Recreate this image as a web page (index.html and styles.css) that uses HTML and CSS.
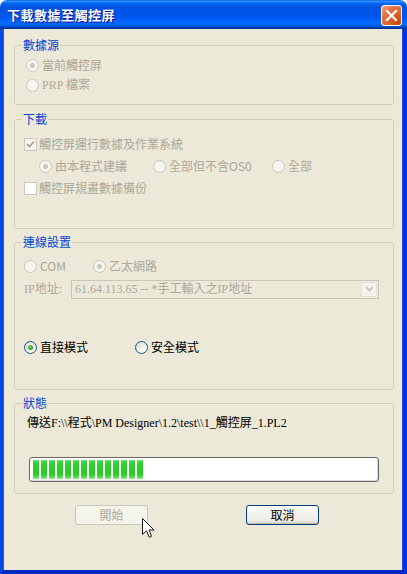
FILE: index.html
```html
<!DOCTYPE html>
<html lang="zh-Hant">
<head>
    <meta charset="UTF-8">
    <meta name="viewport" content="width=device-width, initial-scale=1.0">
    <title>下載數據至觸控屏</title>
    <link rel="stylesheet" href="styles.css">
</head>
<body>
    <section class="window">
        <div class="titlebar">
            <span class="title">下載數據至觸控屏</span>
            <span class="close_btn">
                <svg width="13" height="13" viewBox="0 0 13 13">
                    <path d="M2 2 L11 11 M11 2 L2 11" stroke="#fff" stroke-width="2.2" stroke-linecap="square"/>
                </svg>
            </span>
        </div>
        <div class="dialog_body">
            <fieldset class="group group_source">
                <legend>數據源</legend>
                <div class="group_inner">
                    <label class="opt disabled"><span class="radio checked"></span>當前觸控屏</label>
                    <label class="opt disabled serif"><span class="radio"></span>PRP 檔案</label>
                </div>
            </fieldset>

            <fieldset class="group group_download">
                <legend>下載</legend>
                <div class="group_inner">
                    <label class="opt row22 disabled">
                        <span class="check checked">
                            <svg width="9" height="9" viewBox="0 0 9 9"><path d="M1 4 L3.5 6.5 L8 1.5" stroke="#aca899" stroke-width="1.8" fill="none"/></svg>
                        </span>觸控屏運行數據及作業系統
                    </label>
                    <div class="opt_row row22 indent">
                        <label class="opt disabled w114"><span class="radio checked"></span>由本程式建議</label>
                        <label class="opt disabled w119"><span class="radio"></span>全部但不含OS0</label>
                        <label class="opt disabled"><span class="radio"></span>全部</label>
                    </div>
                    <label class="opt row22 disabled"><span class="check white"></span>觸控屏規畫數據備份</label>
                </div>
            </fieldset>

            <fieldset class="group group_conn">
                <legend>連線設置</legend>
                <div class="group_inner">
                    <div class="opt_row">
                        <label class="opt disabled w69"><span class="radio"></span>COM</label>
                        <label class="opt disabled"><span class="radio checked"></span>乙太網路</label>
                    </div>
                    <div class="ip_row">
                        <span class="ip_label serif">IP地址:</span>
                        <div class="combo">
                            <span class="combo_text serif">61.64.113.65 -- *手工輸入之IP地址</span>
                            <span class="combo_btn">
                                <svg width="9" height="6" viewBox="0 0 9 6"><path d="M1 1 L4.5 4.5 L8 1" stroke="#c8c6bb" stroke-width="2" fill="none"/></svg>
                            </span>
                        </div>
                    </div>
                    <div class="opt_row mode_row">
                        <label class="opt w111"><span class="radio on checked"></span>直接模式</label>
                        <label class="opt"><span class="radio on"></span>安全模式</label>
                    </div>
                </div>
            </fieldset>

            <fieldset class="group group_status">
                <legend>狀態</legend>
                <div class="group_inner">
                    <p class="status_text serif">傳送F:\\程式\PM Designer\1.2\test\\1_觸控屏_1.PL2</p>
                    <div class="progress">
                        <span class="bar"></span><span class="bar"></span><span class="bar"></span><span class="bar"></span>
                        <span class="bar"></span><span class="bar"></span><span class="bar"></span><span class="bar"></span>
                        <span class="bar"></span><span class="bar"></span><span class="bar"></span><span class="bar"></span>
                        <span class="bar"></span><span class="bar"></span>
                    </div>
                </div>
            </fieldset>

            <div class="actions">
                <span class="btn disabled">開始</span>
                <span class="btn default">取消</span>
                <svg class="cursor" width="13" height="21" viewBox="0 0 13 21">
                    <path d="M0.5 0.5 L0.5 16.5 L4.5 12.8 L7.2 19.3 L9.6 18.3 L7 12 L12 12 Z" fill="#fff" stroke="#1a1a2a" stroke-width="1"/>
                </svg>
            </div>
        </div>
    </section>
</body>
</html>
```

FILE: styles.css
```css
* {
    margin: 0;
    padding: 0;
    box-sizing: border-box;
}
body {
    width: 407px;
    height: 574px;
    background: #fff;
    font-family: "Noto Sans CJK TC", sans-serif;
    font-size: 12px;
    line-height: 14px;
    overflow: hidden;
}
.serif {
    font-family: "Liberation Serif", "Noto Sans CJK TC", serif;
}
.window {
    width: 407px;
    height: 574px;
    display: flex;
    flex-direction: column;
}
.titlebar {
    height: 29px;
    display: flex;
    align-items: center;
    justify-content: space-between;
    padding: 0 5px 0 7px;
    border-radius: 7px 7px 0 0;
    background: linear-gradient(to bottom, #0058ee 0%, #3593ff 4%, #288eff 6%, #127dff 8%, #036ffc 10%, #0262ee 14%, #0057e5 20%, #0054e3 24%, #0055eb 56%, #005bf5 66%, #026afe 76%, #0062ef 86%, #0052d6 92%, #0040ab 94%, #003092 100%);
}
.title {
    color: #fff;
    font-weight: bold;
    font-size: 13px;
    letter-spacing: 0.5px;
    text-shadow: 1px 1px #0f1089;
}
.close_btn {
    width: 21px;
    height: 21px;
    display: flex;
    align-items: center;
    justify-content: center;
    border: 1px solid #fff;
    border-radius: 3px;
    background: radial-gradient(circle at 85% 85%, #cc4600 0%, #dc6527 40%, #e5754a 70%, #f1a78c 100%);
    margin-top: 2px;
}
.dialog_body {
    flex: 1;
    background: #ece9d8;
    border-left: 3px solid #0748e0;
    border-right: 4px solid #0633d4;
    border-bottom: 4px solid #0129c4;
    box-shadow: inset 1px 0 #1661f0, inset -1px 0 #1552e6;
    padding: 9px 0 0 11px;
    display: flex;
    flex-direction: column;
}
.group {
    width: 380px;
    border: 1px solid #d0d0bf;
    border-radius: 3px;
    padding: 0;
    min-inline-size: 0;
}
.group legend {
    margin-left: 7px;
    padding: 0 1px;
    color: #0046d5;
    line-height: 14px;
}
.group_source {
    height: 67px;
}
.group_download {
    height: 117px;
    margin-top: 7px;
}
.group_conn {
    height: 155px;
    margin-top: 6px;
}
.group_status {
    height: 98px;
    margin-top: 6px;
}
.group_source .group_inner {
    padding: 3px 0 0 11px;
}
.group_download .group_inner,
.group_conn .group_inner {
    padding: 7px 0 0 9px;
}
.group_status .group_inner {
    padding: 5px 0 0 12px;
}
.opt_row {
    display: flex;
    align-items: center;
    height: 20px;
}
.opt {
    display: flex;
    align-items: center;
    height: 20px;
    color: #000;
    white-space: nowrap;
}
.row22 {
    height: 22px;
}
.indent {
    padding-left: 15px;
}
.w69 { width: 69px; }
.w111 { width: 111px; }
.w114 { width: 114px; }
.w119 { width: 119px; }
.opt.disabled {
    color: #aca899;
}
.radio {
    width: 13px;
    height: 13px;
    border-radius: 50%;
    border: 1px solid #cac8bb;
    background: #f6f5ef;
    margin-right: 3px;
    display: flex;
    align-items: center;
    justify-content: center;
    flex: none;
}
.radio.checked::after {
    content: "";
    width: 5px;
    height: 5px;
    border-radius: 50%;
    background: #cac8bb;
}
.radio.on {
    border-color: #1c5180;
    background: linear-gradient(135deg, #dcd9cf 0%, #f4f3ee 60%, #fff 100%);
}
.radio.on.checked::after {
    background: radial-gradient(circle at 40% 40%, #7ee07e 0%, #21a121 60%, #1a901a 100%);
}
.check {
    width: 13px;
    height: 13px;
    border: 1px solid #cac8bb;
    background: #f4f3ee;
    margin-right: 2px;
    display: flex;
    align-items: center;
    justify-content: center;
    flex: none;
}
.check.white {
    background: #fff;
}
.ip_row {
    display: flex;
    align-items: center;
    height: 22px;
    margin-top: 2px;
    color: #aca899;
}
.ip_label {
    width: 47px;
}
.combo {
    width: 308px;
    height: 19px;
    border: 1px solid #c9c7ba;
    display: flex;
    align-items: center;
    justify-content: space-between;
    padding: 0 1px 0 3px;
}
.combo_text {
    color: #aca899;
}
.combo_btn {
    width: 16px;
    height: 15px;
    background: #f4f3ee;
    border: 1px solid #e5e3d8;
    border-radius: 2px;
    display: flex;
    align-items: center;
    justify-content: center;
}
.mode_row {
    margin-top: 37px;
}
.status_text {
    line-height: 16px;
    height: 16px;
    color: #000;
    white-space: nowrap;
}
.progress {
    width: 350px;
    height: 25px;
    margin: 26px 0 0 2px;
    border: 1px solid #686868;
    border-radius: 3px;
    background: #fff;
    padding: 2px 3px;
    display: flex;
    gap: 2px;
    box-shadow: inset -1px -1px #d8d8d8;
}
.bar {
    width: 6px;
    height: 19px;
    background: linear-gradient(to bottom, #6ade6a 0%, #34d034 15%, #28cc28 50%, #2fce2f 80%, #8fe691 100%);
}
.actions {
    position: relative;
    display: flex;
    height: 20px;
    margin: 11px 0 0 61px;
    gap: 98px;
}
.btn {
    width: 73px;
    height: 20px;
    border-radius: 3px;
    display: flex;
    align-items: center;
    justify-content: center;
}
.btn.disabled {
    border: 1px solid #c9c7ba;
    background: #f5f4ea;
    color: #aca899;
}
.btn.default {
    border: 1px solid #003c74;
    background: linear-gradient(to bottom, #fff 0%, #f4f3ee 40%, #ecebe6 80%, #d6d0c5 100%);
    box-shadow: inset 0 -1px #c4bfb2;
    color: #000;
}
.cursor {
    position: absolute;
    left: 67px;
    top: 13px;
}
```
